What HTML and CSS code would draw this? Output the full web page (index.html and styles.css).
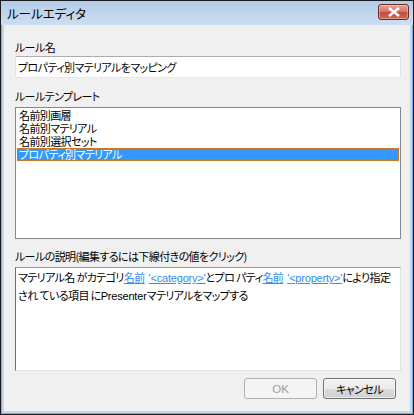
FILE: index.html
```html
<!DOCTYPE html>
<html lang="ja">
<head>
<meta charset="utf-8">
<title>ルールエディタ</title>
<link rel="stylesheet" href="styles.css">
</head>
<body>
<div class="window">
  <div class="titlebar">
    <span class="title">ルールエディタ</span>
    <span class="close">
      <svg width="14" height="10" viewBox="0 0 14 10"><path d="M2 1 L12 9 M12 1 L2 9" stroke="#fff" stroke-width="2.4"/></svg>
    </span>
  </div>
  <div class="client">
    <div class="label l1">ルール名</div>
    <div class="textbox">プロパティ別マテリアルをマッピング</div>
    <div class="label l2">ルールテンプレート</div>
    <div class="listbox">
      <div class="item">名前別画層</div>
      <div class="item">名前別マテリアル</div>
      <div class="item">名前別選択セット</div>
      <div class="item selected">プロパティ別マテリアル</div>
    </div>
    <div class="label l3">ルールの説明(編集するには下線付きの値をクリック)</div>
    <div class="desc">
      <div class="line">マテリアル名 がカテゴリ<span class="link">名前</span><span class="link lat gap">'&lt;category&gt;'</span>とプロ パティ<span class="link">名前</span><span class="link lat gap">'&lt;property&gt;'</span>により指定</div>
      <div class="line">され ている項目 に<span class="lat">Presenter</span>マテリアルをマップする</div>
    </div>
    <div class="buttons">
      <div class="btn disabled">OK</div>
      <div class="btn">キャンセル</div>
    </div>
  </div>
</div>
</body>
</html>
```
FILE: styles.css
```css
html, body {
  margin: 0;
  padding: 0;
  background: #ffffff;
}
.window {
  width: 414px;
  height: 415px;
  box-sizing: border-box;
  border: 1px solid #1c1c1c;
  background: #c3d8ee;
  box-shadow: inset 0 0 0 1px #74ade0;
  display: flex;
  flex-direction: column;
  font-family: "Noto Sans CJK JP", sans-serif;
  font-size: 11px;
  letter-spacing: -0.6px;
  font-feature-settings: "palt";
  color: #000;
}
.titlebar {
  height: 24px;
  flex: none;
  display: flex;
  align-items: flex-start;
  justify-content: space-between;
  background: linear-gradient(to bottom, #b1cbe7 0%, #c3d7ed 60%, #cbdef1 100%);
  padding-left: 6px;
  padding-right: 4px;
}
.title {
  font-size: 12.5px;
  letter-spacing: 0;
  line-height: 14px;
  margin-top: 6px;
  color: #000;
}
.close {
  width: 29px;
  height: 14px;
  margin-top: 3px;
  border: 1px solid #6b2a24;
  border-radius: 3px;
  background: linear-gradient(to bottom, #e4a294 0%, #d2786a 45%, #c24a3c 55%, #cf6b55 100%);
  box-shadow: inset 0 0 0 1px rgba(255,255,255,0.35);
  display: flex;
  align-items: center;
  justify-content: center;
}
.client {
  flex: 1;
  margin: 0 3px 3px 3px;
  background: #f0f0f0;
  padding: 0 9px 0 11px;
  display: flex;
  flex-direction: column;
}
.label {
  line-height: 15px;
  height: 15px;
}
.l1 { margin-top: 15px; }
.l2 { margin-top: 11px; }
.l3 { margin-top: 10px; }
.textbox {
  margin-top: 1px;
  height: 22px;
  box-sizing: border-box;
  border: 1px solid;
  border-color: #abadb3 #e2e3ea #e3e9ef #e2e3ea;
  border-radius: 2px;
  background: #fff;
  padding: 2px 0 0 2px;
  line-height: 16px;
}
.listbox {
  margin-top: 3px;
  height: 132px;
  box-sizing: border-box;
  border: 1px solid #828790;
  background: #fff;
  padding: 1px 1px 0 1px;
}
.item {
  height: 13px;
  line-height: 13px;
  padding-left: 2px;
  box-sizing: border-box;
}
.item.selected {
  background: #3399ff;
  color: #fff;
  outline: 1px dotted #cc7722;
  outline-offset: -1px;
}
.desc {
  margin-top: 3px;
  height: 104px;
  box-sizing: border-box;
  border: 1px solid;
  border-color: #9a9a9a #e3e3e3 #e3e3e3 #6f6f6f;
  background: #fff;
  padding: 1px 0 0 2px;
}
.line {
  line-height: 17px;
  white-space: nowrap;
}
.link {
  color: #2f8cf8;
  text-decoration: underline;
}
.lat {
  font-family: "Liberation Sans", sans-serif;
  font-size: 11px;
  letter-spacing: -0.2px;
}
.gap {
  margin-left: 4px;
}
.buttons {
  margin-top: 7px;
  display: flex;
  justify-content: flex-end;
  gap: 6px;
  padding-right: 5px;
}
.btn {
  width: 73px;
  height: 21px;
  box-sizing: border-box;
  border: 1px solid #707070;
  border-radius: 3px;
  background: linear-gradient(to bottom, #f2f2f2 0%, #ebebeb 50%, #dddddd 50%, #cfcfcf 100%);
  box-shadow: inset 0 0 0 1px rgba(255,255,255,0.6);
  display: flex;
  align-items: center;
  justify-content: center;
  line-height: 14px;
}
.btn.disabled {
  border-color: #adb2b5;
  background: #f4f4f4;
  box-shadow: none;
  color: #a0a0a0;
  font-family: "Liberation Sans", sans-serif;
  font-size: 11.5px;
  letter-spacing: 0;
}
```
